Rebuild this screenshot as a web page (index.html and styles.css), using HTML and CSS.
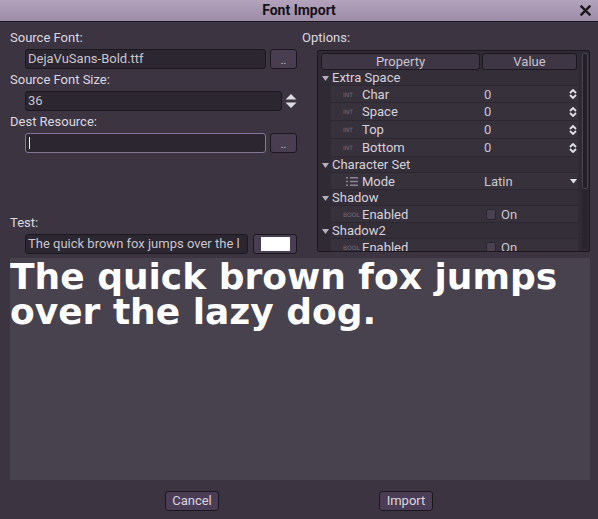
FILE: index.html
```html
<!DOCTYPE html>
<html>
<head>
<meta charset="utf-8">
<link rel="stylesheet" href="styles.css">
</head>
<body>
<div class="dialog">
  <div class="titlebar">
    <span class="tb-side"></span>
    <span class="title">Font Import</span>
    <span class="tb-side close">
      <svg width="11" height="11" viewBox="0 0 11 11"><path d="M1.5 1.5 L9.5 9.5 M9.5 1.5 L1.5 9.5" stroke="#19161b" stroke-width="2.4" stroke-linecap="square"/></svg>
    </span>
  </div>
  <div class="main">
    <div class="top">
      <div class="left">
        <div class="label">Source Font:</div>
        <div class="field-row">
          <div class="lineedit">DejaVuSans-Bold.ttf</div>
          <div class="btn dots">..</div>
        </div>
        <div class="label">Source Font Size:</div>
        <div class="field-row spin-row">
          <div class="lineedit">36</div>
          <div class="spin">
            <svg width="12" height="16" viewBox="0 0 12 16"><path d="M6 1 L11.5 6.5 L0.5 6.5 Z M0.5 9.5 L11.5 9.5 L6 15 Z" fill="#dcdae2"/></svg>
          </div>
        </div>
        <div class="label">Dest Resource:</div>
        <div class="field-row">
          <div class="lineedit focus"><span class="caret"></span></div>
          <div class="btn dots">..</div>
        </div>
        <div class="test-group">
          <div class="label">Test:</div>
          <div class="field-row test-row">
            <div class="lineedit">The quick brown fox jumps over the l</div>
            <div class="btn colorbtn"><span class="swatch"></span></div>
          </div>
        </div>
      </div>
      <div class="right">
        <div class="label">Options:</div>
        <div class="tree">
          <div class="tree-body">
            <div class="head">
              <div class="hbtn prop">Property</div>
              <div class="hbtn val">Value</div>
            </div>

            <div class="row h16 sec">
              <div class="tri"><svg width="7" height="5" viewBox="0 0 7 5"><path d="M0 0 H7 L3.5 5 Z" fill="#b6b0bd"/></svg></div>
              <div class="cell"><span class="secname">Extra Space</span></div>
            </div>
            <div class="row h17">
              <div class="tri"></div>
              <div class="cell">
                <div class="namecol"><span class="badge">INT</span><span class="pname">Char</span></div>
                <div class="valcol"><span>0</span><svg class="updown" width="8" height="10" viewBox="0 0 8 10"><path d="M1 4 L4 1 L7 4 M1 6 L4 9 L7 6" fill="none" stroke="#e4e2ea" stroke-width="1.8"/></svg></div>
              </div>
            </div>
            <div class="row h18">
              <div class="tri"></div>
              <div class="cell">
                <div class="namecol"><span class="badge">INT</span><span class="pname">Space</span></div>
                <div class="valcol"><span>0</span><svg class="updown" width="8" height="10" viewBox="0 0 8 10"><path d="M1 4 L4 1 L7 4 M1 6 L4 9 L7 6" fill="none" stroke="#e4e2ea" stroke-width="1.8"/></svg></div>
              </div>
            </div>
            <div class="row h18">
              <div class="tri"></div>
              <div class="cell">
                <div class="namecol"><span class="badge">INT</span><span class="pname">Top</span></div>
                <div class="valcol"><span>0</span><svg class="updown" width="8" height="10" viewBox="0 0 8 10"><path d="M1 4 L4 1 L7 4 M1 6 L4 9 L7 6" fill="none" stroke="#e4e2ea" stroke-width="1.8"/></svg></div>
              </div>
            </div>
            <div class="row h18">
              <div class="tri"></div>
              <div class="cell">
                <div class="namecol"><span class="badge">INT</span><span class="pname">Bottom</span></div>
                <div class="valcol"><span>0</span><svg class="updown" width="8" height="10" viewBox="0 0 8 10"><path d="M1 4 L4 1 L7 4 M1 6 L4 9 L7 6" fill="none" stroke="#e4e2ea" stroke-width="1.8"/></svg></div>
              </div>
            </div>

            <div class="row h16 sec">
              <div class="tri"><svg width="7" height="5" viewBox="0 0 7 5"><path d="M0 0 H7 L3.5 5 Z" fill="#b6b0bd"/></svg></div>
              <div class="cell"><span class="secname">Character Set</span></div>
            </div>
            <div class="row h17">
              <div class="tri"></div>
              <div class="cell">
                <div class="namecol"><span class="listicon"><svg width="12" height="9" viewBox="0 0 12 9"><path d="M0 0h2v1.6H0zM0 3.7h2v1.6H0zM0 7.4h2V9H0zM4 0h8v1.6H4zM4 3.7h8v1.6H4zM4 7.4h8V9H4z" fill="#8c8594"/></svg></span><span class="pname">Mode</span></div>
                <div class="valcol"><span>Latin</span><svg class="ddarrow" width="7" height="5" viewBox="0 0 7 5"><path d="M0 0 H7 L3.5 4.5 Z" fill="#e4e2ea"/></svg></div>
              </div>
            </div>

            <div class="row h16 sec">
              <div class="tri"><svg width="7" height="5" viewBox="0 0 7 5"><path d="M0 0 H7 L3.5 5 Z" fill="#b6b0bd"/></svg></div>
              <div class="cell"><span class="secname">Shadow</span></div>
            </div>
            <div class="row h17">
              <div class="tri"></div>
              <div class="cell">
                <div class="namecol"><span class="badge">BOOL</span><span class="pname">Enabled</span></div>
                <div class="valcol start"><span class="check"></span><span>On</span></div>
              </div>
            </div>

            <div class="row h16 sec">
              <div class="tri"><svg width="7" height="5" viewBox="0 0 7 5"><path d="M0 0 H7 L3.5 5 Z" fill="#b6b0bd"/></svg></div>
              <div class="cell"><span class="secname">Shadow2</span></div>
            </div>
            <div class="row h17">
              <div class="tri"></div>
              <div class="cell">
                <div class="namecol"><span class="badge">BOOL</span><span class="pname">Enabled</span></div>
                <div class="valcol start"><span class="check"></span><span>On</span></div>
              </div>
            </div>
          </div>
          <div class="scrollbar"><div class="thumb"></div></div>
        </div>
      </div>
    </div>
    <div class="preview">The quick brown fox jumps over the lazy dog.</div>
    <div class="buttons">
      <div class="btn action">Cancel</div>
      <div class="btn action">Import</div>
    </div>
  </div>
</div>
</body>
</html>
```

FILE: styles.css
```css
html, body {
  margin: 0;
  padding: 0;
}
body {
  width: 598px;
  height: 519px;
  overflow: hidden;
  background: #3c3541;
  font-family: Roboto, "Noto Sans", sans-serif;
  font-size: 13px;
  color: #dcd8e0;
}
.dialog {
  display: flex;
  flex-direction: column;
  height: 519px;
}
.titlebar {
  height: 21px;
  border-bottom: 1px solid #1b171e;
  background: linear-gradient(#b3a3bd, #9c8ca7);
  display: grid;
  grid-template-columns: 1fr auto 1fr;
  align-items: center;
}
.title {
  font-weight: bold;
  font-size: 14px;
  color: #151217;
  line-height: 21px;
}
.close {
  justify-self: end;
  margin-right: 7px;
  display: flex;
}
.main {
  padding: 8px 8px 0 10px;
  display: flex;
  flex-direction: column;
}
.top {
  display: grid;
  grid-template-columns: 287px 288px;
  column-gap: 5px;
}
.label {
  height: 16px;
  line-height: 16px;
  color: #dcd8e0;
  white-space: nowrap;
}
.left {
  display: flex;
  flex-direction: column;
}
.field-row {
  display: flex;
  height: 20px;
  margin: 3px 0 3px 15px;
  gap: 4px;
}
.spin-row { gap: 3px; }
.test-row { gap: 5px; margin-bottom: 0; }
.test-group {
  margin-top: auto;
  margin-bottom: -1px;
}
.lineedit {
  flex: 1;
  box-sizing: border-box;
  height: 20px;
  background: #2b2630;
  border: 1px solid #1c181f;
  border-radius: 3px;
  padding: 0 2px;
  line-height: 18px;
  color: #c9c4cd;
  white-space: nowrap;
  overflow: hidden;
}
.lineedit.focus {
  border-color: #86739a;
  display: flex;
  align-items: center;
}
.caret {
  width: 1px;
  height: 12px;
  background: #f2f0f5;
  margin-left: 1px;
}
.btn {
  box-sizing: border-box;
  background: #483d51;
  border: 1px solid #1c181f;
  border-radius: 3px;
  color: #d8d4dd;
}
.dots {
  width: 27px;
  flex: none;
  text-align: center;
  font-size: 10px;
  line-height: 22px;
}
.spin {
  width: 12px;
  flex: none;
  display: flex;
  align-items: center;
  justify-content: center;
}
.colorbtn {
  width: 44px;
  flex: none;
  display: flex;
  align-items: center;
  padding-left: 7px;
}
.swatch {
  width: 29px;
  height: 14px;
  background: #ffffff;
}
.right {
  display: flex;
  flex-direction: column;
}
.tree {
  margin: 4px 0 1px 15px;
  height: 202px;
  box-sizing: border-box;
  background: #2f2a34;
  border: 1px solid #1c181f;
  border-radius: 2px;
  padding: 2px 1px 0 3px;
  display: flex;
  gap: 4px;
  overflow: hidden;
}
.tree-body {
  width: 257px;
  flex: none;
  display: flex;
  flex-direction: column;
}
.head {
  display: flex;
  gap: 2px;
  height: 17px;
  flex: none;
}
.hbtn {
  box-sizing: border-box;
  background: #3e3645;
  border: 1px solid #1c181f;
  border-radius: 3px;
  color: #c8c3cd;
  text-align: center;
  line-height: 15px;
}
.hbtn.prop { width: 159px; }
.hbtn.val { width: 95px; }
.row {
  display: flex;
  flex: none;
}
.h16 { height: 16px; }
.h17 { height: 17px; }
.h18 { height: 18px; }
.tri {
  width: 10px;
  flex: none;
  display: flex;
  align-items: center;
  padding-left: 1px;
  box-sizing: border-box;
}
.cell {
  flex: 1;
  display: flex;
  align-items: center;
  background: #37313c;
  border-bottom: 1px solid #2c2731;
  box-sizing: border-box;
}
.sec .cell {
  background: #342e39;
}
.secname {
  padding-left: 1px;
  color: #d6d2da;
}
.namecol {
  width: 151px;
  flex: none;
  box-sizing: border-box;
  padding-left: 12px;
  display: flex;
  align-items: center;
}
.badge {
  width: 19px;
  flex: none;
  white-space: nowrap;
  font-size: 6px;
  color: #767080;
  letter-spacing: 0;
  font-family: "DejaVu Sans", sans-serif;
}
.listicon {
  width: 19px;
  flex: none;
  display: flex;
  padding-left: 3px;
  box-sizing: border-box;
}
.pname {
  color: #d6d2da;
  white-space: nowrap;
}
.valcol {
  flex: 1;
  display: flex;
  align-items: center;
  justify-content: space-between;
  padding: 0 1px 0 2px;
  color: #cbc6cf;
}
.valcol.start {
  justify-content: flex-start;
  gap: 5px;
  padding-left: 4px;
}
.check {
  width: 10px;
  height: 11px;
  border-radius: 2px;
  background: #4a4052;
  border: 1px solid #2a2530;
  box-sizing: border-box;
}
.scrollbar {
  width: 6px;
  flex: none;
  height: 196px;
  background: #29242d;
  border-radius: 2px;
  display: flex;
  flex-direction: column;
}
.thumb {
  height: 136px;
  box-sizing: border-box;
  border: 1px solid #4b4352;
  background: #221e26;
  border-radius: 2px;
}
.preview {
  margin-top: 5px;
  width: 580px;
  height: 222px;
  background: #47424d;
  color: #ffffff;
  font-family: "DejaVu Sans", sans-serif;
  font-weight: bold;
  font-size: 36px;
  line-height: 35px;
  padding-top: 1px;
  box-sizing: border-box;
  overflow: hidden;
}
.buttons {
  margin-top: 11px;
  display: flex;
  padding-left: 155px;
  gap: 160px;
}
.action {
  width: 54px;
  height: 20px;
  text-align: center;
  line-height: 18px;
  background: #4b3d56;
  color: #d9d5de;
}
```
